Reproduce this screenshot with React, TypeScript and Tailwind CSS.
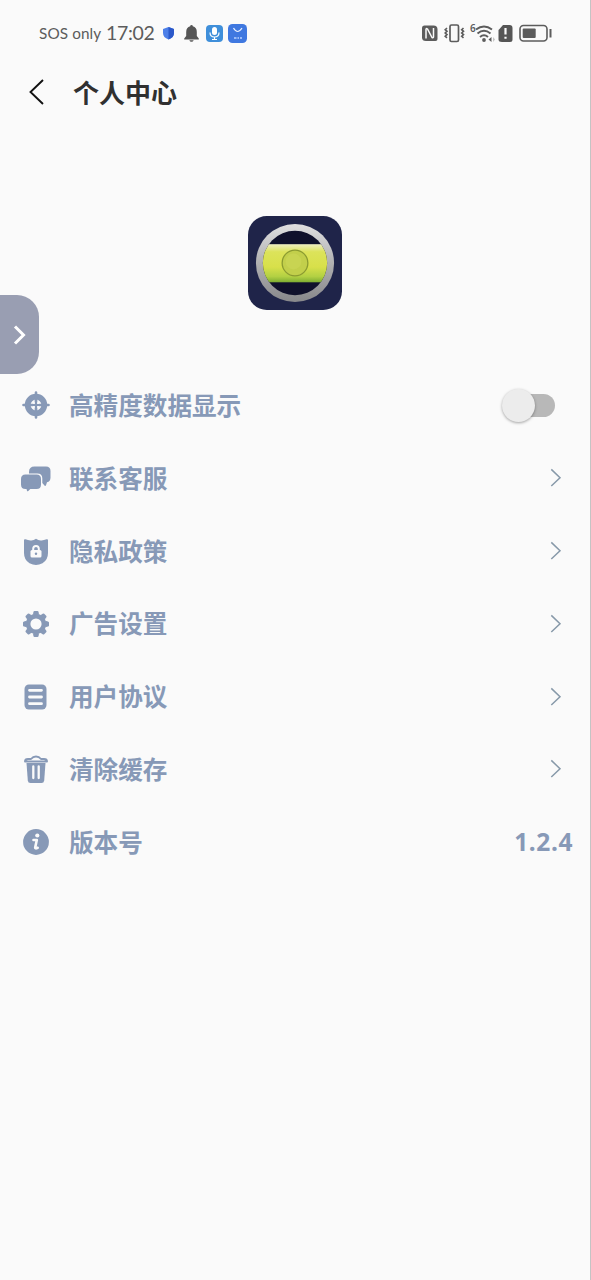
import React from 'react';

const TargetIcon = () => (
    <svg width="32" height="32" viewBox="0 0 32 32" fill="none">
        <circle cx="16" cy="16" r="8.300" stroke="#8799b7" strokeWidth="5.800" />
        <path d="M16 3.500v9M16 19.500v9M3.500 16h9M19.500 16h9" stroke="#8799b7" strokeWidth="2.600" strokeLinecap="round" />
        <path d="M16 11v10M11 16h10" stroke="#8799b7" strokeWidth="2.200" />
    </svg>
);

const ChatIcon = () => (
    <svg width="32" height="32" viewBox="0 0 32 32" fill="#8799b7">
        <path d="M14.500 4.500h11.500q4.500 0 4.500 4.500v6.500q0 4-3.500 4.700l-1 3q-.7 1.300-1.500.2L22.300 21v-4.500q0-5-5-5H9V10q0-5.500 5.500-5.500z" />
        <path d="M5.500 12.500h11q4.500 0 4.500 4.500v5.500q0 4.500-4.500 4.500h-6.200l-2 2q-1 .7-1.300-.3L6.500 27H5.500Q1 27 1 22.500V17q0-4.500 4.500-4.500z" />
    </svg>
);

const ShieldIcon = () => (
    <svg width="32" height="32" viewBox="0 0 32 32">
        <path d="M16 3.800q2.500 2 5.500 1.700 2.500-.1 5-1.200 1.500-.5 1.500 1V18q0 7-5.500 10.200Q19 30 16 30t-6.500-1.800Q4 25 4 18V5.300q0-1.500 1.500-1 2.500 1.100 5 1.200 3 .3 5.500-1.700z" fill="#8799b7" />
        <rect x="10.500" y="15" width="11" height="7.500" rx="1.500" fill="#fafafa" />
        <path d="M13.200 16v-2.200a2.800 2.800 0 0 1 5.600 0V16" fill="none" stroke="#fafafa" strokeWidth="2" />
        <circle cx="16" cy="18.700" r="1.200" fill="#8799b7" />
    </svg>
);

const GearIcon = () => (
    <svg width="32" height="32" viewBox="0 0 32 32" fill="none" stroke="#8799b7">
        <circle cx="16" cy="16" r="7.900" strokeWidth="4.600" />
        {[0, 45, 90, 135, 180, 225, 270, 315].map((angle) => (
            <path key={angle} d="M14.300 6l.3-1.800h2.800l.3 1.800z" strokeWidth="2.400" strokeLinejoin="round" fill="#8799b7" transform={`rotate(${angle} 16 16)`} />
        ))}
    </svg>
);

const DocumentIcon = () => (
    <svg width="32" height="32" viewBox="0 0 32 32">
        <rect x="4.500" y="3.500" width="22" height="25" rx="4.500" fill="#8799b7" />
        <path d="M9.500 9.300h12M9.500 16h12M9.500 22.700h12" stroke="#fafafa" strokeWidth="2.800" strokeLinecap="round" />
    </svg>
);

const TrashIcon = () => (
    <svg width="32" height="32" viewBox="0 0 32 32" fill="none">
        <path d="M5 8.500q0-2.500 3-2.500h3Q13 3.500 16 3.500T21 6h3q3 0 3 2.500z" stroke="#8799b7" strokeWidth="1.900" strokeLinejoin="round" />
        <path d="M6.500 10h19l-1.300 17.500q-.3 2.500-2.700 2.500h-11Q8 30 7.800 27.500z" fill="#8799b7" />
        <path d="M13.300 13.500V25M18.700 13.500V25" stroke="#fafafa" strokeWidth="2.300" strokeLinecap="round" />
    </svg>
);

const InfoIcon = () => (
    <svg width="32" height="32" viewBox="0 0 32 32">
        <circle cx="16" cy="16" r="12.900" fill="#8799b7" />
        <circle cx="17.300" cy="9.500" r="2.100" fill="#fafafa" />
        <path d="M13.500 14h3.300l-1.600 7.500q-.2 1.500 2.500.3" fill="none" stroke="#fafafa" strokeWidth="2.600" strokeLinecap="round" strokeLinejoin="round" />
    </svg>
);

const AppLogo = () => (
    <svg width="94" height="94" viewBox="0 0 95 95">
        <defs>
            <linearGradient id="ring" x1="0" y1="0" x2="0" y2="1">
                <stop offset="0" stopColor="#e0e0e1" />
                <stop offset="0.500" stopColor="#b0b0b1" />
                <stop offset="1" stopColor="#88888b" />
            </linearGradient>
            <linearGradient id="vial" x1="0" y1="0" x2="0" y2="1">
                <stop offset="0" stopColor="#eeeec2" />
                <stop offset="0.200" stopColor="#dce35a" />
                <stop offset="0.600" stopColor="#d8e04a" />
                <stop offset="0.850" stopColor="#b2d043" />
                <stop offset="1" stopColor="#7dac32" />
            </linearGradient>
            <clipPath id="dial">
                <circle cx="47.500" cy="47.500" r="32.500" />
            </clipPath>
        </defs>
        <rect width="95" height="95" rx="19" fill="#1f2449" />
        <circle cx="47.500" cy="47.500" r="39.500" fill="url(#ring)" />
        <circle cx="47.500" cy="47.500" r="32.500" fill="#10112c" />
        <rect x="14" y="28.500" width="67" height="38.500" fill="url(#vial)" clipPath="url(#dial)" />
        <circle cx="47.500" cy="47.500" r="13" fill="#c2cf4b" stroke="#8b9b31" strokeWidth="1.300" />
        <circle cx="46" cy="46" r="8" fill="#ccd756" opacity="0.600" />
    </svg>
);

const Chevron = () => (
    <svg width="14" height="20" viewBox="0 0 14 20" fill="none">
        <path d="M3.300 1.400l8.700 8.300-8.700 8.300" stroke="#8799a9" strokeWidth="1.500" />
    </svg>
);

const StatusBar = () => (
    <div className="flex h-[66px] items-center justify-between pr-[38px] pl-[39px] text-[#5c5c5c]">
        <div className="flex items-center">
            <span className="w-[67px] pt-px whitespace-nowrap font-['Lato','Noto_Sans',sans-serif] text-[15.300px] tracking-[0.100px]">SOS only</span>
            <span className="w-[56px] whitespace-nowrap font-['Lato','Noto_Sans',sans-serif] text-[19.500px] tracking-[-0.350px]">17:02</span>
            <svg width="86" height="22" viewBox="0 0 86 22">
                <path d="M6.500 5l5.500 2v4q0 4.500-5.500 6.500Q1 15.500 1 11V7z" fill="#4d7fe8" />
                <path d="M6.500 5l5.500 2v4q0 4.500-5.500 6.500z" fill="#2b58c9" />
                <path d="M29.500 3a1.300 1.300 0 0 1 1.300 1.300q4 1 4 5.700v4l2 2.500v1h-14.600v-1l2-2.500v-4q0-4.700 4-5.700A1.300 1.300 0 0 1 29.500 3z" fill="#555" />
                <path d="M27.300 18.300h4.400q-.6 1.500-2.200 1.500t-2.200-1.500z" fill="#555" />
                <rect x="44" y="3" width="17" height="17" rx="4" fill="#3f8fda" />
                <rect x="50" y="5" width="5" height="8" rx="2.500" fill="#fff" />
                <path d="M48 10.500q0 4.500 4.500 4.500t4.500-4.500M52.500 15v2.500M50 17.500h5" fill="none" stroke="#fff" strokeWidth="1.200" />
                <rect x="66" y="2" width="19" height="19" rx="4.500" fill="#3f78e0" />
                <path d="M71.500 6q4 7 8.500 0" fill="none" stroke="#e8f0ff" strokeWidth="1.200" />
                <path d="M72 16h2.500M75.500 16h1.500M78 16h2" stroke="#b9d1ff" strokeWidth="1.300" />
            </svg>
        </div>
        <svg width="132" height="24" viewBox="0 0 132 24" fill="none">
            {/* NFC */}
            <path d="M4.500 4.500h9q4 0 4 4V18q0 2-2 2H6q-4 0-4-3.500v-9.500q0-2.500 2.500-2.500z" fill="#5c5c5c" />
            <path d="M6 17.500V8.500q0-1.500 1.500-.5l4.500 8.500q1.500.8 1.500-.8V7" stroke="#fafafa" strokeWidth="1.500" />
            {/* vibration */}
            <rect x="30" y="4" width="8.500" height="16.500" rx="1.500" stroke="#5c5c5c" strokeWidth="1.700" />
            <path d="M27 7l-1.800 1.700 1.800 1.600-1.800 1.700 1.800 1.600-1.800 1.700 1.800 1.600M43.500 7l-1.800 1.700 1.800 1.600-1.800 1.700 1.800 1.600-1.800 1.700 1.800 1.600" stroke="#5c5c5c" strokeWidth="1.600" />
            {/* wifi */}
            <text x="50" y="11" fontSize="10" fontFamily="Noto Sans" fontWeight="600" fill="#5c5c5c">6</text>
            <path d="M56 8.500q8-6 16 0M57.500 12.500q6.500-5.500 13 0M60 16q4-3.500 8 0" stroke="#5c5c5c" strokeWidth="1.900" />
            <circle cx="64" cy="19" r="1.900" fill="#5c5c5c" />
            <path d="M71.500 16v5l-3-2.500z" fill="#5c5c5c" />
            <path d="M73 16l2 2.500-2 2.500z" fill="#c5c5c5" />
            {/* sim alert */}
            <path d="M79 8l3.500-4H89q3 0 3 3v11.500q0 2.500-2.500 2.500h-8Q78 21 78 18.500V9z" fill="#555" transform="translate(.5 0)" />
            <path d="M85.500 7v6.500M85.500 15.800v2" stroke="#fafafa" strokeWidth="2.200" />
            {/* battery */}
            <rect x="100" y="4.500" width="27" height="15.500" rx="3.500" stroke="#5c5c5c" strokeWidth="1.600" />
            <rect x="102.700" y="7.500" width="13" height="9.500" rx="1" fill="#5c5c5c" />
            <path d="M130.500 8v8.500" stroke="#5c5c5c" strokeWidth="2" />
        </svg>
    </div>
);

interface MenuRowProps {
    icon: React.ReactNode;
    label: string;
    children?: React.ReactNode;
}

const MenuRow: React.FC<MenuRowProps> = ({ icon, label, children = <Chevron /> }) => (
    <li className="flex h-[72.800px] items-center pr-[28px] pl-5">
        {icon}
        <span className="mb-[2px] ml-[17px] flex-1 text-[24.600px] font-bold">{label}</span>
        {children}
    </li>
);

const App: React.FC = () => {
    return (
        <div className="relative h-[1280px] w-[591px] overflow-hidden border-r border-[#c4c4c4] bg-[#fafafa] font-['Noto_Sans_CJK_SC',sans-serif]">
            <StatusBar />
            <header className="flex h-[52px] items-center pl-7">
                <svg width="18" height="28" viewBox="0 0 18 28" fill="none">
                    <path d="M15 2L2.500 14 15 26" stroke="#111" strokeWidth="1.900" />
                </svg>
                <h1 className="mb-[2px] ml-[27px] text-[26px] font-bold text-[#303030]">个人中心</h1>
            </header>
            <div className="flex justify-center pt-[98px]">
                <AppLogo />
            </div>
            <ul className="mt-[59px] text-[#8799b7]">
                <MenuRow icon={<TargetIcon />} label="高精度数据显示">
                    <button className="mr-[7px] flex h-[23px] w-[52px] items-center rounded-full bg-[#b8b8b8]">
                        <span className="-ml-px size-[33px] rounded-full bg-[#ececec] shadow-[0_1px_3px_rgba(0,0,0,0.350)]" />
                    </button>
                </MenuRow>
                <MenuRow icon={<ChatIcon />} label="联系客服" />
                <MenuRow icon={<ShieldIcon />} label="隐私政策" />
                <MenuRow icon={<GearIcon />} label="广告设置" />
                <MenuRow icon={<DocumentIcon />} label="用户协议" />
                <MenuRow icon={<TrashIcon />} label="清除缓存" />
                <MenuRow icon={<InfoIcon />} label="版本号">
                    <span className="-mr-[11px] pt-px font-['Noto_Sans',sans-serif] text-[24.500px] font-bold tracking-[0.600px]">1.2.4</span>
                </MenuRow>
            </ul>
            <div className="absolute top-[295px] left-0 flex h-[79px] w-[39px] items-center rounded-r-[22px] bg-[#999eb2] pl-[13px]">
                <svg width="15" height="22" viewBox="0 0 15 22" fill="none">
                    <path d="M2 2.500l8.500 8.500L2 19.500" stroke="#fff" strokeWidth="3" />
                </svg>
            </div>
        </div>
    );
};

export default App;
